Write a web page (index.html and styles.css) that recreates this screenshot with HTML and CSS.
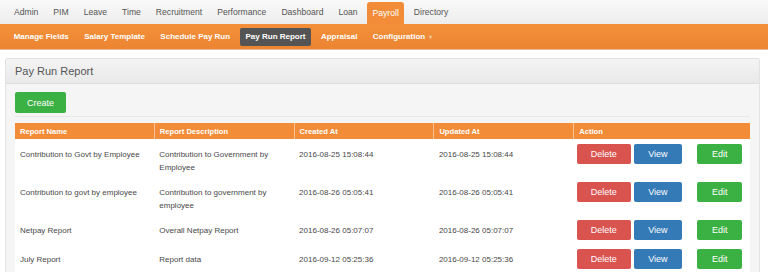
FILE: index.html
```html
<!DOCTYPE html>
<html lang="en">
<head>
    <meta charset="UTF-8">
    <title>Pay Run Report</title>
    <link rel="stylesheet" href="styles.css">
</head>
<body>
    <!-- main modules -->
    <div class="topnav">
        <a href="#">Admin</a>
        <a href="#">PIM</a>
        <a href="#">Leave</a>
        <a href="#">Time</a>
        <a href="#">Recruitment</a>
        <a href="#">Performance</a>
        <a href="#">Dashboard</a>
        <a href="#">Loan</a>
        <a href="#" class="active">Payroll</a>
        <a href="#">Directory</a>
    </div>

    <!-- payroll menu -->
    <div class="subnav">
        <a href="#">Manage Fields</a>
        <a href="#">Salary Template</a>
        <a href="#">Schedule Pay Run</a>
        <a href="#" class="active">Pay Run Report</a>
        <a href="#">Appraisal</a>
        <a href="#">Configuration <span class="caret">&#9662;</span></a>
    </div>

    <div class="panel">
        <div class="panel-head">Pay Run Report</div>
        <div class="panel-body">
            <button class="btn btn-green create">Create</button>
            <div class="divider"></div>

            <table class="report-table">
                <thead>
                    <tr>
                        <th>Report Name</th>
                        <th>Report Description</th>
                        <th>Created At</th>
                        <th>Updated At</th>
                        <th>Action</th>
                    </tr>
                </thead>
                <tbody>
                    <tr>
                        <td>Contribution to Govt by Employee</td>
                        <td>Contribution to Government by Employee</td>
                        <td>2016-08-25 15:08:44</td>
                        <td>2016-08-25 15:08:44</td>
                        <td class="actions">
                            <button class="btn btn-red">Delete</button>
                            <button class="btn btn-blue">View</button>
                            <button class="btn btn-green edit">Edit</button>
                        </td>
                    </tr>
                    <tr>
                        <td>Contribution to govt by employee</td>
                        <td>Contribution to government by employee</td>
                        <td>2016-08-26 05:05:41</td>
                        <td>2016-08-26 05:05:41</td>
                        <td class="actions">
                            <button class="btn btn-red">Delete</button>
                            <button class="btn btn-blue">View</button>
                            <button class="btn btn-green edit">Edit</button>
                        </td>
                    </tr>
                    <tr>
                        <td>Netpay Report</td>
                        <td>Overall Netpay Report</td>
                        <td>2016-08-26 05:07:07</td>
                        <td>2016-08-26 05:07:07</td>
                        <td class="actions">
                            <button class="btn btn-red">Delete</button>
                            <button class="btn btn-blue">View</button>
                            <button class="btn btn-green edit">Edit</button>
                        </td>
                    </tr>
                    <tr>
                        <td>July Report</td>
                        <td>Report data</td>
                        <td>2016-09-12 05:25:36</td>
                        <td>2016-09-12 05:25:36</td>
                        <td class="actions">
                            <button class="btn btn-red">Delete</button>
                            <button class="btn btn-blue">View</button>
                            <button class="btn btn-green edit">Edit</button>
                        </td>
                    </tr>
                </tbody>
            </table>
        </div>
    </div>
</body>
</html>
```

FILE: styles.css
```css
body {
    margin: 0;
    background: #fff;
    font-family: "Liberation Sans", Arial, sans-serif;
    color: #444;
    overflow: hidden;
}

a {
    text-decoration: none;
}

.topnav {
    display: flex;
    height: 24px;
    padding-left: 6.5px;
    background: linear-gradient(#f9f9f9, #ededed);
}

.topnav a {
    margin: 0 2px;
    padding: 0 5.5px;
    font-size: 8.6px;
    line-height: 24px;
    color: #555;
}

.topnav a.active {
    margin-top: 2px;
    line-height: 22px;
    background: #f28c38;
    color: #fff;
    border-radius: 3px 3px 0 0;
}

.subnav {
    display: flex;
    height: 18px;
    padding: 4px 0 3px 6px;
    background: linear-gradient(#f39039, #ec8432);
    border-bottom: 1px solid #e5b994;
}

.subnav a {
    margin: 0 2.2px;
    padding: 0 5.5px;
    font-size: 8px;
    font-weight: bold;
    line-height: 18px;
    color: #fff;
    border-radius: 2px;
}

.subnav a.active {
    background: #545454;
}

.caret {
    font-size: 6px;
    color: #f7c9a0;
    margin-left: 2px;
}

.panel {
    margin: 8px 8px 0 5px;
    background: #f5f5f5;
    border: 1px solid #e2e2e2;
    border-radius: 2px;
}

.panel-head {
    height: 24px;
    padding: 0 9px;
    line-height: 24px;
    font-size: 11px;
    color: #555;
    background: linear-gradient(#f4f4f4, #e9e9e9);
    border-bottom: 1px solid #dedede;
}

.panel-body {
    padding: 8px 9px 0;
}

.btn {
    height: 20px;
    border: none;
    border-radius: 2px;
    font-family: inherit;
    font-size: 9px;
    color: #fff;
    cursor: pointer;
    padding: 0;
    vertical-align: top;
}

.btn-green {
    background: #3bb043;
}

.btn-red {
    background: #d9534f;
    width: 54px;
}

.btn-blue {
    background: #337ab7;
    width: 48px;
    margin-left: 1px;
}

.create {
    width: 51px;
    height: 21px;
}

.edit {
    width: 45px;
    margin-left: 13px;
}

.divider {
    height: 1px;
    margin: 3px 0 6px;
    background: #e7e7e7;
}

.report-table {
    width: 100%;
    border-collapse: collapse;
    table-layout: fixed;
    background: #fff;
}

.report-table th {
    height: 16px;
    padding: 0 5px;
    background: #f28c38;
    color: #fff;
    font-size: 7.6px;
    font-weight: bold;
    text-align: left;
    border-left: 1px solid #f7c194;
}

.report-table th:first-child {
    border-left: none;
}

.report-table th:nth-child(-n+4) {
    width: 128.8px;
}

.report-table td {
    padding: 10px 5px 3px;
    font-size: 8px;
    line-height: 12.5px;
    vertical-align: top;
    color: #484848;
}

.report-table td.actions {
    padding: 5px 3px 4px;
    white-space: nowrap;
}
```
